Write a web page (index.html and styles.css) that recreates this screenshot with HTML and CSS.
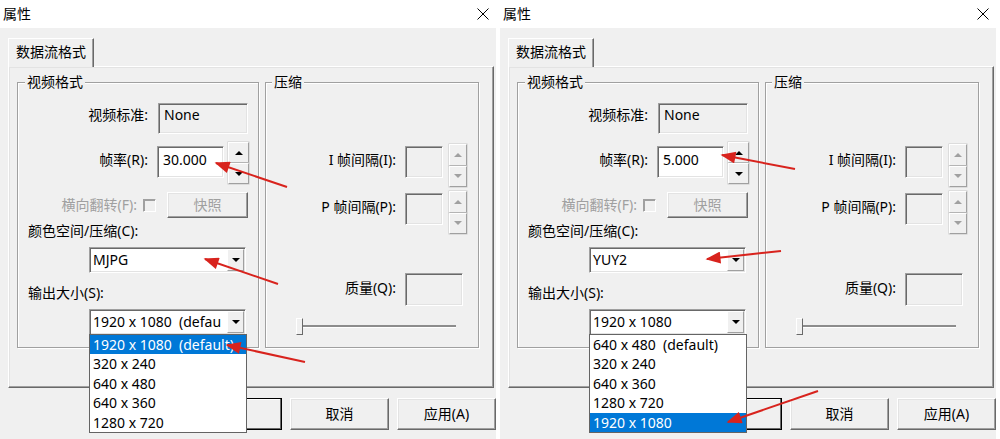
FILE: index.html
```html
<!DOCTYPE html>
<html lang="zh-CN">
<head>
  <meta charset="UTF-8" />
  <title>属性</title>
  <link rel="stylesheet" href="styles.css">
</head>
<body>
  <div class="page">

    <!-- 30 fps / MJPG -->
    <div class="dialog">
      <div class="titlebar">
        <span class="title">属性</span>
        <svg class="close" width="12" height="12" viewBox="0 0 12 12"><path d="M0.5 0.5 L11.5 11.5 M11.5 0.5 L0.5 11.5" stroke="#000" stroke-width="1" fill="none"/></svg>
      </div>
      <div class="dialog-body">
        <div class="tabs"><div class="tab">数据流格式</div></div>
        <div class="panel">
          <div class="group group-video">
            <div class="group-title">视频格式</div>
            <div class="row row-std">
              <span class="lbl">视频标准:</span>
              <div class="field readonly w-std">None</div>
            </div>
            <div class="row row-rate">
              <span class="lbl">帧率(R):</span>
              <div class="field edit w-rate">30.000</div>
              <div class="spin"><span class="spin-btn up"></span><span class="spin-btn down"></span></div>
            </div>
            <div class="row row-flip">
              <span class="lbl lbl-flip disabled">横向翻转(F):</span>
              <span class="check"></span>
              <button class="btn btn-snap" disabled>快照</button>
            </div>
            <div class="caption">颜色空间/压缩(C):</div>
            <div class="combo">
              <span class="combo-text">MJPG</span>
              <span class="combo-btn"></span>
            </div>
            <div class="caption caption-size">输出大小(S):</div>
            <div class="combo">
              <span class="combo-text">1920 x 1080  (defau</span>
              <span class="combo-btn"></span>
              <ul class="droplist">
                <li class="selected">1920 x 1080  (default)</li>
                <li>320 x 240</li>
                <li>640 x 480</li>
                <li>640 x 360</li>
                <li>1280 x 720</li>
              </ul>
            </div>
          </div>
          <div class="group group-comp">
            <div class="group-title">压缩</div>
            <div class="row row-i">
              <span class="lbl">I 帧间隔(I):</span>
              <div class="field readonly w-gap"></div>
              <div class="spin spin-off"><span class="spin-btn up"></span><span class="spin-btn down"></span></div>
            </div>
            <div class="row row-p">
              <span class="lbl">P 帧间隔(P):</span>
              <div class="field readonly w-gap"></div>
              <div class="spin spin-off"><span class="spin-btn up"></span><span class="spin-btn down"></span></div>
            </div>
            <div class="row row-q">
              <span class="lbl">质量(Q):</span>
              <div class="field readonly w-q"></div>
            </div>
            <div class="slider"><span class="thumb"></span></div>
          </div>
        </div>
        <div class="buttons">
          <button class="btn btn-default">确定</button>
          <button class="btn">取消</button>
          <button class="btn">应用(A)</button>
        </div>
      </div>
    </div>

    <!-- 5 fps / YUY2 -->
    <div class="dialog">
      <div class="titlebar">
        <span class="title">属性</span>
        <svg class="close" width="12" height="12" viewBox="0 0 12 12"><path d="M0.5 0.5 L11.5 11.5 M11.5 0.5 L0.5 11.5" stroke="#000" stroke-width="1" fill="none"/></svg>
      </div>
      <div class="dialog-body">
        <div class="tabs"><div class="tab">数据流格式</div></div>
        <div class="panel">
          <div class="group group-video">
            <div class="group-title">视频格式</div>
            <div class="row row-std">
              <span class="lbl">视频标准:</span>
              <div class="field readonly w-std">None</div>
            </div>
            <div class="row row-rate">
              <span class="lbl">帧率(R):</span>
              <div class="field edit w-rate">5.000</div>
              <div class="spin"><span class="spin-btn up"></span><span class="spin-btn down"></span></div>
            </div>
            <div class="row row-flip">
              <span class="lbl lbl-flip disabled">横向翻转(F):</span>
              <span class="check"></span>
              <button class="btn btn-snap" disabled>快照</button>
            </div>
            <div class="caption">颜色空间/压缩(C):</div>
            <div class="combo">
              <span class="combo-text">YUY2</span>
              <span class="combo-btn"></span>
            </div>
            <div class="caption caption-size">输出大小(S):</div>
            <div class="combo">
              <span class="combo-text">1920 x 1080</span>
              <span class="combo-btn"></span>
              <ul class="droplist">
                <li>640 x 480  (default)</li>
                <li>320 x 240</li>
                <li>640 x 360</li>
                <li>1280 x 720</li>
                <li class="selected">1920 x 1080</li>
              </ul>
            </div>
          </div>
          <div class="group group-comp">
            <div class="group-title">压缩</div>
            <div class="row row-i">
              <span class="lbl">I 帧间隔(I):</span>
              <div class="field readonly w-gap"></div>
              <div class="spin spin-off"><span class="spin-btn up"></span><span class="spin-btn down"></span></div>
            </div>
            <div class="row row-p">
              <span class="lbl">P 帧间隔(P):</span>
              <div class="field readonly w-gap"></div>
              <div class="spin spin-off"><span class="spin-btn up"></span><span class="spin-btn down"></span></div>
            </div>
            <div class="row row-q">
              <span class="lbl">质量(Q):</span>
              <div class="field readonly w-q"></div>
            </div>
            <div class="slider"><span class="thumb"></span></div>
          </div>
        </div>
        <div class="buttons">
          <button class="btn btn-default">确定</button>
          <button class="btn">取消</button>
          <button class="btn">应用(A)</button>
        </div>
      </div>
    </div>

    <!-- red callout arrows -->
    <svg class="arrows" width="1000" height="439" viewBox="0 0 1000 439">
      <defs>
        <marker id="head" viewBox="0 0 10 8" refX="9" refY="4" markerWidth="16" markerHeight="12" markerUnits="userSpaceOnUse" orient="auto">
          <path d="M0 0 L10 4 L0 8 z" fill="#d8231d"/>
        </marker>
      </defs>
      <g stroke="#d8231d" stroke-width="2" marker-end="url(#head)">
        <line x1="287" y1="187" x2="216" y2="163"/>
        <line x1="278" y1="284" x2="205" y2="259"/>
        <line x1="305" y1="362" x2="227" y2="345"/>
        <line x1="795" y1="169" x2="722" y2="155"/>
        <line x1="781" y1="251" x2="707" y2="259"/>
        <line x1="818" y1="391" x2="728" y2="422"/>
      </g>
    </svg>
  </div>
</body>
</html>
```

FILE: styles.css
```css
* {
  box-sizing: border-box;
}

body {
  margin: 0;
  background: #fff;
  font-family: "Noto Sans", "Noto Sans CJK SC", sans-serif;
  font-size: 14px;
  color: #000;
}

.page {
  position: relative;
  display: flex;
  gap: 4px;
  width: 1000px;
  height: 439px;
  overflow: hidden;
}

.dialog {
  width: 496px;
  height: 439px;
  background: #f0f0f0;
  flex: none;
}

.titlebar {
  height: 28px;
  background: #fff;
  display: flex;
  align-items: center;
  justify-content: space-between;
  padding: 0 7px 0 3px;
}

.title {
  line-height: 16px;
}

.close {
  display: block;
}

.dialog-body {
  padding: 10px 0 0 8px;
}

/* tab strip */
.tabs {
  display: flex;
}

.tab {
  position: relative;
  z-index: 1;
  width: 86px;
  height: 29px;
  margin-bottom: -1px;
  background: #f0f0f0;
  border: 1px solid;
  border-color: #fff #696969 transparent #fff;
  border-bottom: none;
  box-shadow: inset -1px 0 #a0a0a0;
  line-height: 26px;
  text-align: center;
}

.panel {
  width: 486px;
  height: 322px;
  border: 1px solid;
  border-color: #fff #696969 #696969 #fff;
  box-shadow: inset -1px -1px #a0a0a0, inset 1px 1px #e3e3e3;
  padding: 15px 0 0 8px;
  display: flex;
  gap: 6px;
}

/* etched group boxes */
.group {
  height: 266px;
  border: 1px solid #a0a0a0;
  box-shadow: inset 1px 1px #fff, 1px 1px #fff;
  display: flex;
  flex-direction: column;
  align-items: flex-start;
}

.group-video {
  width: 242px;
}

.group-comp {
  width: 214px;
}

.group-title {
  margin: -9px 0 0 7px;
  padding: 0 2px;
  background: #f0f0f0;
  line-height: 16px;
}

.group-comp .group-title {
  margin-left: 6px;
}

.row {
  display: flex;
  align-items: flex-start;
  flex: none;
}

.lbl {
  width: 130px;
  flex: none;
  text-align: right;
  line-height: 16px;
  white-space: nowrap;
}

.disabled {
  color: #a0a0a0;
}

/* sunken fields */
.field {
  flex: none;
  border: 1px solid;
  border-color: #a0a0a0 #fff #fff #a0a0a0;
  box-shadow: inset 1px 1px #696969, inset -1px -1px #e3e3e3;
  line-height: 16px;
  padding-left: 5px;
}

.readonly {
  background: #f0f0f0;
}

.edit {
  background: #fff;
}

.row-std {
  margin-top: 13px;
  height: 31px;
}

.row-std .lbl {
  margin-top: 4px;
}

.w-std {
  width: 90px;
  height: 31px;
  margin-left: 10px;
  padding-top: 3px;
}

.row-rate {
  margin-top: 12px;
  height: 32px;
}

.row-rate .lbl {
  margin-top: 6px;
}

.w-rate {
  width: 67px;
  height: 32px;
  margin-left: 9px;
  padding-top: 5px;
}

/* up/down spinner */
.spin {
  flex: none;
  display: flex;
  flex-direction: column;
  width: 21px;
  height: 42px;
  margin: -4px 0 0 4px;
}

.spin-btn {
  flex: 1;
  display: flex;
  align-items: center;
  justify-content: center;
  background: #f0f0f0;
  border: 1px solid;
  border-color: #fff #a0a0a0 #a0a0a0 #fff;
  box-shadow: 0 0 0 0.5px #c8c8c8;
}

.spin-btn::before {
  content: "";
  border-left: 4px solid transparent;
  border-right: 4px solid transparent;
}

.up::before {
  border-bottom: 4px solid #000;
}

.down::before {
  border-top: 4px solid #000;
}

.spin-off .up::before {
  border-bottom-color: #a0a0a0;
}

.spin-off .down::before {
  border-top-color: #a0a0a0;
}

.row-flip {
  margin-top: 14px;
  height: 26px;
}

.lbl-flip {
  width: 119px;
  margin-top: 5px;
}

.check {
  flex: none;
  width: 13px;
  height: 13px;
  margin: 7px 0 0 6px;
  border: 1px solid;
  border-color: #a0a0a0 #fff #fff #a0a0a0;
  box-shadow: inset 1px 1px #a0a0a0;
  background: #f0f0f0;
}

/* push buttons */
.btn {
  flex: none;
  font: inherit;
  color: #000;
  background: #f0f0f0;
  border: 1px solid;
  border-color: #fff #696969 #696969 #fff;
  box-shadow: inset -1px -1px #a0a0a0, inset 1px 1px #e3e3e3;
  padding: 0;
  line-height: 16px;
}

.btn:disabled {
  color: #a0a0a0;
}

.btn-snap {
  width: 81px;
  height: 26px;
  margin-left: 11px;
}

.caption {
  margin: 5px 0 0 10px;
  line-height: 16px;
}

.caption-size {
  margin-top: 12px;
}

/* drop-down combo */
.combo {
  position: relative;
  display: flex;
  width: 157px;
  height: 26px;
  margin: 8px 0 0 71px;
  background: #fff;
  border: 1px solid;
  border-color: #a0a0a0 #fff #fff #a0a0a0;
  box-shadow: inset 1px 1px #696969, inset -1px -1px #e3e3e3;
}

.combo-text {
  flex: 1;
  min-width: 0;
  overflow: hidden;
  white-space: pre;
  padding: 4px 0 0 3px;
  line-height: 16px;
}

.combo-btn {
  flex: none;
  width: 17px;
  margin: 1px 1px 1px 0;
  display: flex;
  align-items: center;
  justify-content: center;
  background: #f0f0f0;
  border: 1px solid;
  border-color: #fff #a0a0a0 #a0a0a0 #fff;
}

.combo-btn::before {
  content: "";
  border-left: 4px solid transparent;
  border-right: 4px solid transparent;
  border-top: 4px solid #000;
}

.droplist {
  position: absolute;
  z-index: 5;
  top: 100%;
  left: -1px;
  width: 158px;
  margin: 0;
  padding: 0;
  list-style: none;
  background: #fff;
  border: 1px solid #646464;
}

.droplist li {
  height: 19.4px;
  line-height: 19.4px;
  padding-left: 3px;
  white-space: pre;
}

.droplist .selected {
  background: #0078d7;
  color: #fff;
}

/* compression group */
.row-i {
  margin-top: 56px;
  height: 32px;
}

.row-p {
  margin-top: 15px;
  height: 32px;
}

.row-i .lbl,
.row-p .lbl {
  margin-top: 6px;
}

.w-gap {
  width: 38px;
  height: 32px;
  margin-left: 9px;
}

.group-comp .spin {
  width: 18px;
  height: 43px;
  margin: -2px 0 0 6px;
}

.row-q {
  margin-top: 48px;
  height: 33px;
}

.row-q .lbl {
  margin-top: 7px;
}

.w-q {
  width: 58px;
  height: 33px;
  margin-left: 9px;
}

.slider {
  display: flex;
  width: 160px;
  height: 17px;
  margin: 12px 0 0 30px;
  background:
    linear-gradient(#8c8c8c, #8c8c8c) no-repeat 0 7px / 100% 2px,
    linear-gradient(#fff, #fff) no-repeat 0 9px / 100% 1px;
}

.thumb {
  flex: none;
  width: 7px;
  height: 17px;
  background: #f0f0f0;
  border: 1px solid;
  border-color: #fff #696969 #696969 #fff;
}

.buttons {
  display: flex;
  justify-content: flex-end;
  gap: 8px;
  width: 488px;
  margin-top: 10px;
}

.buttons .btn {
  width: 99px;
  height: 32px;
}

.btn-default {
  border-color: #000;
  box-shadow: inset -1px -1px #696969, inset 1px 1px #fff;
}

.arrows {
  position: absolute;
  top: 0;
  left: 0;
  z-index: 10;
  pointer-events: none;
}
```
